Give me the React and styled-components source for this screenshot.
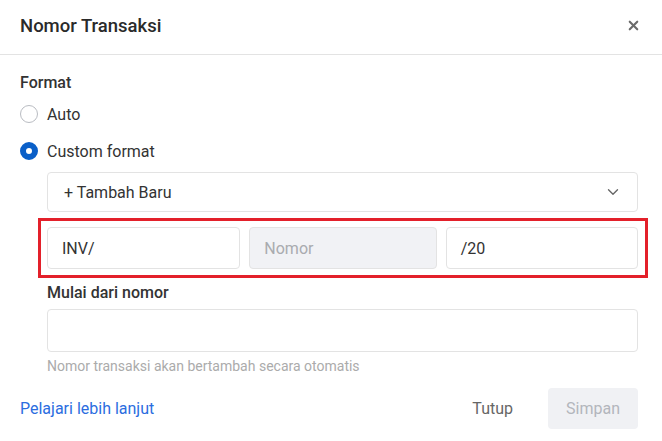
import React from "react";
import styled, { createGlobalStyle } from "styled-components";
import { ChevronDown, X } from "lucide-react";

const GlobalStyle = createGlobalStyle`
  * { box-sizing: border-box; }
  body {
    margin: 0;
    background: #fff;
    font-family: Roboto, "Liberation Sans", Arial, sans-serif;
  }
`;

function App() {
  return (
    <Modal>
      <GlobalStyle />
      <Header>
        <Title>Nomor Transaksi</Title>
        <CloseButton>
          <X size={15} strokeWidth={3.4} />
        </CloseButton>
      </Header>
      <Body>
        <Label>Format</Label>
        <RadioRow>
          <Radio />
          <span>Auto</span>
        </RadioRow>
        <RadioRow>
          <Radio checked />
          <span>Custom format</span>
        </RadioRow>
        <Indented>
          <Select>
            <span>+ Tambah Baru</span>
            <ChevronDown size={18} strokeWidth={1.8} color="#666" />
          </Select>
          <Highlight>
            <Field>INV/</Field>
            <Field disabled>Nomor</Field>
            <Field>/20</Field>
          </Highlight>
          <SubLabel>Mulai dari nomor</SubLabel>
          <Input />
          <Help>Nomor transaksi akan bertambah secara otomatis</Help>
        </Indented>
        <Footer>
          <Link>Pelajari lebih lanjut</Link>
          <Actions>
            <GhostButton>Tutup</GhostButton>
            <SaveButton>Simpan</SaveButton>
          </Actions>
        </Footer>
      </Body>
    </Modal>
  );
}

export default App;

const Modal = styled.div`
  width: 662px;
  height: 441px;
  background: #fff;
  overflow: hidden;
`;

const Header = styled.div`
  height: 55px;
  display: flex;
  align-items: center;
  justify-content: space-between;
  padding: 0 21px 2px 20px;
  border-bottom: 1px solid #e3e3e3;
`;

const Title = styled.div`
  font-size: 18.5px;
  font-weight: 500;
  color: #2a2a2a;
`;

const CloseButton = styled.div`
  display: flex;
  color: #6b6b6b;
  margin-top: -1px;
`;

const Body = styled.div`
  padding: 18px 24px 0 20px;
`;

const Label = styled.div`
  font-size: 16px;
  font-weight: 500;
  color: #333;
  line-height: 20px;
`;

const RadioRow = styled.div`
  display: flex;
  align-items: center;
  gap: 9px;
  height: 24px;
  margin-top: 13px;
  font-size: 16px;
  color: #333;
  &:nth-of-type(2) { margin-top: 9px; }
`;

const Radio = styled.span`
  width: 18px;
  height: 18px;
  border-radius: 50%;
  border: ${(p) => (p.checked ? "6px solid #0a5fc8" : "1px solid #b9bcc2")};
  background: #fff;
`;

const Indented = styled.div`
  margin-left: 27px;
  margin-top: 9px;
`;

const Select = styled.div`
  height: 40px;
  display: flex;
  align-items: center;
  justify-content: space-between;
  padding: 0 15px 0 16px;
  border: 1px solid #e3e3e3;
  border-radius: 4px;
  font-size: 16px;
  color: #333;
`;

const Highlight = styled.div`
  display: grid;
  grid-template-columns: 193fr 187fr 192fr;
  gap: 9px;
  margin: 6px -10px 0 -9px;
  padding: 6px 7px 6px 6px;
  border: 3px solid #e3202a;
`;

const Field = styled.div`
  height: 42px;
  display: flex;
  align-items: center;
  padding: 0 14px;
  border: 1px solid #e3e3e3;
  border-radius: 4px;
  font-size: 16px;
  color: ${(p) => (p.disabled ? "#a9abaf" : "#333")};
  background: ${(p) => (p.disabled ? "#f1f2f5" : "#fff")};
`;

const SubLabel = styled(Label)`
  margin-top: 5px;
`;

const Input = styled.div`
  height: 43px;
  margin-top: 6px;
  border: 1px solid #e3e3e3;
  border-radius: 4px;
`;

const Help = styled.div`
  margin-top: 6px;
  font-size: 14px;
  line-height: 16px;
  color: #ababab;
`;

const Footer = styled.div`
  display: flex;
  align-items: center;
  justify-content: space-between;
  margin-top: 14px;
`;

const Link = styled.div`
  font-size: 16px;
  color: #2b6de0;
`;

const Actions = styled.div`
  display: flex;
  align-items: center;
  gap: 19px;
`;

const GhostButton = styled.div`
  padding: 0 16px;
  font-size: 16px;
  color: #666;
`;

const SaveButton = styled.div`
  width: 90px;
  height: 41px;
  display: flex;
  align-items: center;
  justify-content: center;
  border-radius: 4px;
  background: #f0f1f4;
  font-size: 16px;
  color: #b3b6bc;
`;
